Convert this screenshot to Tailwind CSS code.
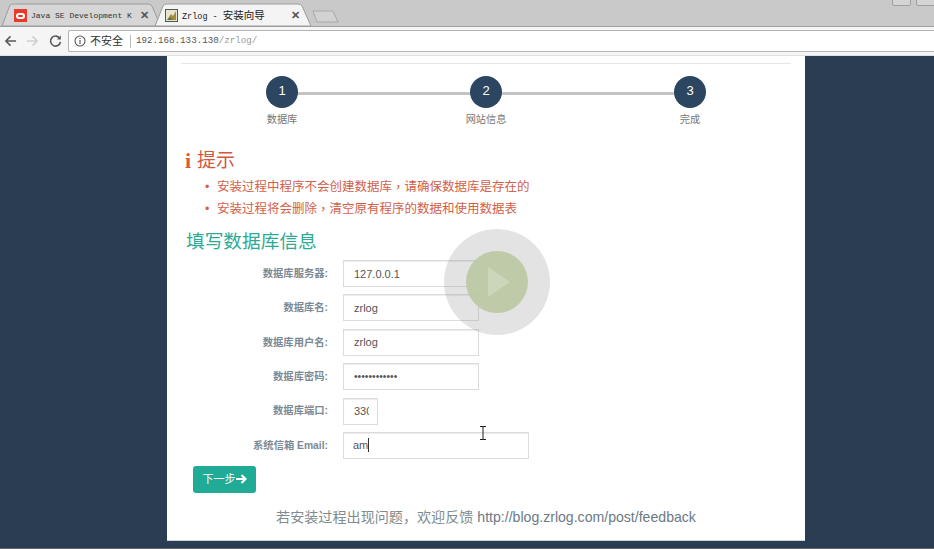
<!DOCTYPE html>
<html lang="zh-CN">
<head>
<meta charset="UTF-8">
<meta name="viewport" content="width=device-width, initial-scale=1.0">
<title>Zrlog - 安装向导</title>
<script src="https://cdn.jsdelivr.net/npm/@tailwindcss/browser@4"></script>
</head>
<body class="relative w-[934px] h-[549px] overflow-hidden bg-[#2a3d53] font-['Liberation_Sans','Noto_Sans_CJK_SC',sans-serif]">

<!-- tab strip -->
<div class="relative h-[27px] bg-[#c9c9c9] border-b border-[#a0a0a0]">
  <svg class="absolute left-0 top-0" width="345" height="27" viewBox="0 0 345 27">
    <path d="M2 26 L10 5 Q11 4 13 4 L148 4 Q151 4 152 6 L158 20 L155 26 Z" fill="#d6d6d6" stroke="#9c9c9c"/>
    <path d="M155 26 L163 6 Q164 4 167 4 L298 4 Q301 4 302 6 L311 26 Z" fill="#f4f4f4" stroke="#9c9c9c"/>
    <path d="M313 11 L333 11 L338 22 L317 22 Z" fill="#d2d2d2" stroke="#a8a8a8"/>
  </svg>
  <div class="absolute left-[14px] top-[9px] w-[13px] h-[13px] bg-[#e8392b] flex items-center justify-center">
    <div class="w-[9px] h-[6px] border-2 border-white rounded-[3px]"></div>
  </div>
  <span class="absolute left-[31px] top-[10px] whitespace-nowrap text-[8px] leading-[12px] text-[#333] font-['Liberation_Mono','Noto_Sans_CJK_SC',monospace]">Java SE Development K</span>
  <span class="absolute left-[140px] top-[8px] text-[11px] leading-[14px] text-[#555] font-bold">✕</span>
  <svg class="absolute left-[165px] top-[9px]" width="13" height="13" viewBox="0 0 13 13">
    <rect x="0.5" y="0.5" width="12" height="12" fill="#e8e4d0" stroke="#555"/>
    <path d="M2 11 L6 5 L8 7 L11 2 L11 11 Z" fill="#a08c3c"/>
    <path d="M2 11 L5 8 L8 11 Z" fill="#5d7a3a"/>
  </svg>
  <span class="absolute left-[182px] top-[9px] whitespace-nowrap text-[8.5px] leading-[14px] text-[#222] font-['Liberation_Mono','Noto_Sans_CJK_SC',monospace]">Zrlog - <span class="text-[10.5px]">安装向导</span></span>
  <span class="absolute left-[291px] top-[8px] text-[11px] leading-[14px] text-[#555] font-bold">✕</span>
  <div class="absolute left-[892px] top-[-5px] w-[19px] h-[11px] border border-[#a0a0a0] rounded-[2px] bg-[#d4d4d4]"></div>
  <div class="absolute left-[916px] top-[-5px] w-[20px] h-[11px] border border-[#a0a0a0] rounded-[2px] bg-[#d4d4d4]"></div>
</div>

<!-- toolbar -->
<div class="h-[29px] bg-[#f5f5f5] border-b border-[#e2e2e2] flex items-center">
  <svg class="ml-[4px]" width="13" height="14" viewBox="0 0 14 14" fill="none" stroke="#5a5a5a" stroke-width="1.7">
    <path d="M13 7 H2 M7 2 L2 7 L7 12"/>
  </svg>
  <svg class="ml-[9px]" width="13" height="14" viewBox="0 0 14 14" fill="none" stroke="#cfcfcf" stroke-width="1.7">
    <path d="M1 7 H12 M7 2 L12 7 L7 12"/>
  </svg>
  <svg class="ml-[10px]" width="13" height="14" viewBox="0 0 14 14" fill="none" stroke="#5a5a5a" stroke-width="1.7">
    <path d="M11.8 4.5 A5.4 5.4 0 1 0 12.4 8"/>
    <path d="M12.7 1.2 V5.4 H8.5 Z" fill="#5a5a5a" stroke="none"/>
  </svg>
  <div class="ml-[6px] flex-1 h-[22px] bg-white border-y border-l border-[#b4b4b4] rounded-l-[2px] flex items-center">
    <svg class="ml-[5px]" width="12" height="12" viewBox="0 0 12 12" fill="none" stroke="#555" stroke-width="1.1">
      <circle cx="6" cy="6" r="5"/>
      <path d="M6 5 V9 M6 3 V4"/>
    </svg>
    <span class="ml-[4px] text-[11px] leading-[14px] text-[#333]">不安全</span>
    <div class="ml-[7px] w-px h-[13px] bg-[#bbb]"></div>
    <span class="ml-[5px] text-[9.2px] leading-[14px] text-[#555] font-['Liberation_Mono',monospace]">192.168.133.130<span class="text-[#999]">/zrlog/</span></span>
  </div>
</div>

<!-- page -->
<div class="relative w-[638px] h-[485px] ml-[167px] bg-white border-b border-[#cfd3d6]">
  <div class="pt-[7px] px-[14px]">
    <div class="h-px bg-[#e6e6e6]"></div>
  </div>

  <!-- steps -->
  <div class="relative mt-[12px] h-[54px] mx-[99px] flex justify-between">
    <div class="absolute left-[16px] right-[16px] top-[16px] h-[3px] bg-[#c4c4c4]"></div>
    <div class="relative flex flex-col items-center w-[32px]">
      <div class="w-[32px] h-[32px] rounded-full bg-[#2c4560] text-white text-[13px] flex items-center justify-center pb-[2px]">1</div>
      <span class="mt-[5px] whitespace-nowrap text-[10.2px] leading-[14px] text-[#777]">数据库</span>
    </div>
    <div class="relative flex flex-col items-center w-[32px]">
      <div class="w-[32px] h-[32px] rounded-full bg-[#2c4560] text-white text-[13px] flex items-center justify-center pb-[2px]">2</div>
      <span class="mt-[5px] whitespace-nowrap text-[10.2px] leading-[14px] text-[#777]">网站信息</span>
    </div>
    <div class="relative flex flex-col items-center w-[32px]">
      <div class="w-[32px] h-[32px] rounded-full bg-[#2c4560] text-white text-[13px] flex items-center justify-center pb-[2px]">3</div>
      <span class="mt-[5px] whitespace-nowrap text-[10.2px] leading-[14px] text-[#777]">完成</span>
    </div>
  </div>

  <!-- notice -->
  <div class="mt-[19px] ml-[18px] flex items-center h-[24px] text-[#d2573f]">
    <span class="w-[12px] text-[22px] leading-[24px] font-bold font-['Liberation_Serif',serif] text-[#e05a30]">i</span>
    <span class="text-[19px] leading-[24px]">提示</span>
  </div>
  <ul class="mt-[3px] ml-[38px] text-[12.5px] leading-[22px] text-[#d2604a]">
    <li class="flex whitespace-nowrap"><span class="w-[12px]">•</span>安装过程中程序不会创建数据库<span class="font-['Noto_Sans_CJK_TC']">，</span>请确保数据库是存在的</li>
    <li class="flex whitespace-nowrap"><span class="w-[12px]">•</span>安装过程将会删除<span class="font-['Noto_Sans_CJK_TC']">，</span>清空原有程序的数据和使用数据表</li>
  </ul>

  <h2 class="mt-[9px] ml-[19px] text-[18.7px] leading-[26px] font-normal text-[#2bab96]">填写数据库信息</h2>

  <!-- form -->
  <form class="mt-[5px]">
    <div class="flex items-center h-[27px] mb-[7.4px]">
      <label class="w-[161px] text-right text-[10.3px] font-bold text-[#7b8a95]">数据库服务器:</label>
      <input class="ml-[15px] w-[136px] h-[27px] px-[10px] border border-[#dcdcdc] shadow-[inset_0_1px_1px_rgba(0,0,0,0.08)] text-[11px] text-[#555] outline-none" value="127.0.0.1">
    </div>
    <div class="flex items-center h-[27px] mb-[7.4px]">
      <label class="w-[161px] text-right text-[10.3px] font-bold text-[#7b8a95]">数据库名:</label>
      <input class="ml-[15px] w-[136px] h-[27px] px-[10px] border border-[#dcdcdc] shadow-[inset_0_1px_1px_rgba(0,0,0,0.08)] text-[11px] text-[#555] outline-none" value="zrlog">
    </div>
    <div class="flex items-center h-[27px] mb-[7.4px]">
      <label class="w-[161px] text-right text-[10.3px] font-bold text-[#7b8a95]">数据库用户名:</label>
      <input class="ml-[15px] w-[136px] h-[27px] px-[10px] border border-[#dcdcdc] shadow-[inset_0_1px_1px_rgba(0,0,0,0.08)] text-[11px] text-[#555] outline-none" value="zrlog">
    </div>
    <div class="flex items-center h-[27px] mb-[7.4px]">
      <label class="w-[161px] text-right text-[10.3px] font-bold text-[#7b8a95]">数据库密码:</label>
      <input class="ml-[15px] w-[136px] h-[27px] px-[10px] border border-[#dcdcdc] shadow-[inset_0_1px_1px_rgba(0,0,0,0.08)] text-[10.3px] text-[#555] outline-none" value="••••••••••••">
    </div>
    <div class="flex items-center h-[27px] mb-[7.4px]">
      <label class="w-[161px] text-right text-[10.3px] font-bold text-[#7b8a95]">数据库端口:</label>
      <input class="ml-[15px] w-[35px] h-[27px] pl-[10px] pr-[8px] border border-[#dcdcdc] shadow-[inset_0_1px_1px_rgba(0,0,0,0.08)] text-[11px] text-[#555] outline-none" value="3306">
    </div>
    <div class="flex items-center h-[27px]">
      <label class="w-[161px] text-right text-[10.3px] font-bold text-[#7b8a95]">系统信箱 Email:</label>
      <div class="ml-[15px] w-[186px] h-[27px] px-[9px] border border-[#dcdcdc] shadow-[inset_0_1px_1px_rgba(0,0,0,0.08)] text-[11px] text-[#555] flex items-center">am<span class="w-px h-[14px] bg-[#333]"></span></div>
    </div>
    <button type="button" class="mt-[7px] ml-[26px] w-[63px] h-[27px] rounded-[3px] bg-[#1fab95] text-white text-[11px] flex items-center justify-center">
      下一步
      <svg width="11" height="10" viewBox="0 0 11 10" fill="none" stroke="white" stroke-width="2.2">
        <path d="M0 5 H9 M5.5 1 L9.5 5 L5.5 9"/>
      </svg>
    </button>
  </form>

  <p class="mt-[13px] text-center text-[14.1px] leading-[20px] text-[#7f8c8d]">若安装过程出现问题<span class="font-['Noto_Sans_CJK_TC']">，</span>欢迎反馈 <span class="text-[#6b7a85]">http://blog.zrlog.com/post/feedback</span></p>

  <!-- i-beam cursor -->
  <svg class="absolute left-[312px] top-[370px]" width="8" height="14" viewBox="0 0 8 14" fill="none" stroke="#222" stroke-width="1">
    <path d="M1 0.5 H7 M1 13.5 H7 M4 0.5 V13.5"/>
  </svg>

  <!-- video play button overlay -->
  <div class="absolute left-[277px] top-[173px] w-[106px] h-[106px] rounded-full bg-[#8f8f8f]/25 flex items-center justify-center">
    <div class="w-[62px] h-[62px] rounded-full bg-[#bcc8a4]/95 flex items-center justify-center">
      <svg class="ml-[3px]" width="22" height="30" viewBox="0 0 22 30">
        <path d="M0 0 L22 15 L0 30 Z" fill="#ccd6bb"/>
      </svg>
    </div>
  </div>
</div>

<!-- bottom edge of the recording -->
<div class="absolute left-0 right-0 bottom-0 h-px bg-[#666]"></div>

</body>
</html>
